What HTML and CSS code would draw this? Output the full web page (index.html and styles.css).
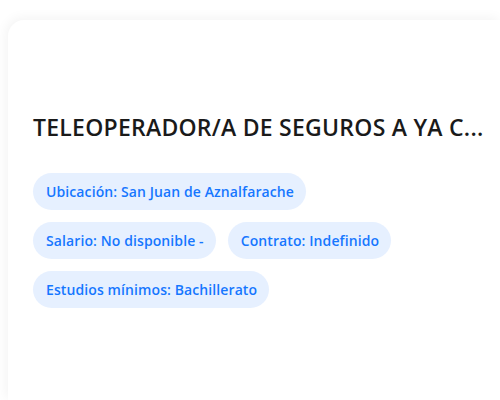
FILE: index.html
```html
<!DOCTYPE html>
<html lang="es">
<head>
<meta charset="utf-8">
<link rel="stylesheet" href="styles.css">
</head>
<body>
<div class="card">
  <h2 class="title">TELEOPERADOR/A DE SEGUROS A YA C...</h2>
  <div class="chips">
    <span class="chip">Ubicación: San Juan de Aznalfarache</span>
    <span class="chip">Salario: No disponible -</span>
    <span class="chip">Contrato: Indefinido</span>
    <span class="chip">Estudios mínimos: Bachillerato</span>
  </div>
</div>
</body>
</html>
```
FILE: styles.css
```css
html, body {
  margin: 0;
  padding: 0;
  background: #ffffff;
  overflow: hidden;
  width: 500px;
  height: 400px;
}
body {
  padding: 20px 0 0 8px;
  box-sizing: border-box;
  font-family: "Open Sans", "Noto Sans", sans-serif;
}
.card {
  width: 492px;
  height: 380px;
  box-sizing: border-box;
  background: #ffffff;
  border-radius: 16px 0 0 0;
  box-shadow: -2px -2px 12px rgba(0, 0, 0, 0.05);
  padding: 93px 0 0 25px;
}
.title {
  margin: 0 0 32px 0;
  font-size: 23px;
  font-weight: 600;
  letter-spacing: 0.25px;
  color: #1a1a1a;
  line-height: 28px;
  white-space: nowrap;
}
.chips {
  display: flex;
  flex-wrap: wrap;
  gap: 12px;
  width: 380px;
}
.chip {
  display: inline-block;
  height: 37px;
  line-height: 37px;
  padding: 0 12px 0 13px;
  border-radius: 19px;
  background: #e6f0ff;
  color: #1677ff;
  font-size: 14px;
  font-weight: 600;
  letter-spacing: 0.1px;
  white-space: nowrap;
}
```
